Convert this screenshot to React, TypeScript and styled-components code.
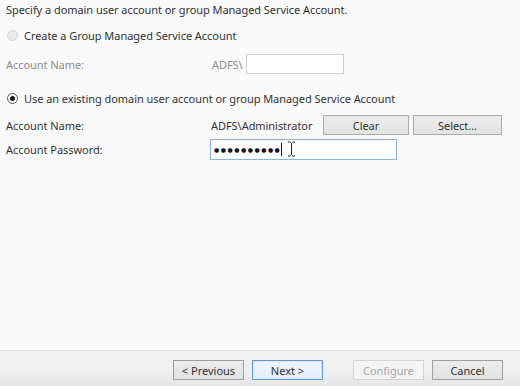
import styled, {createGlobalStyle} from "styled-components"
import {FC} from "react"

const GlobalStyle = createGlobalStyle`
  html, body {
    margin: 0;
    padding: 0;
    background: #fafafa;
  }
  body {
    font-family: "Noto Sans", "Open Sans", sans-serif;
    font-size: 11px;
    letter-spacing: -0.05px;
    color: #333;
  }
`

const App: FC = () => {
  return <Window>
    <GlobalStyle />
    <Content>
      <Intro>Specify a domain user account or group Managed Service Account.</Intro>

      <RadioRow $top={8}>
        <Radio $checked={false} $disabled />
        <span>Create a Group Managed Service Account</span>
      </RadioRow>

      <FieldRow $top={9}>
        <Label $disabled>Account Name:</Label>
        <Value>
          <Muted>ADFS\</Muted>
          <TextBox $width={98} />
        </Value>
      </FieldRow>

      <RadioRow $top={14}>
        <Radio $checked />
        <span>Use an existing domain user account or group Managed Service Account</span>
      </RadioRow>

      <FieldRow $top={7}>
        <Label>Account Name:</Label>
        <Value>
          <AccountText>ADFS\Administrator</AccountText>
          <SmallButton $width={86}>Clear</SmallButton>
          <SmallButton $width={89}>Select...</SmallButton>
        </Value>
      </FieldRow>

      <FieldRow $top={2}>
        <Label>Account Password:</Label>
        <Value>
          <PasswordBox>
            <Dots>●●●●●●●●●●</Dots>
            <Caret />
            <IBeam width="9" height="16" viewBox="0 0 9 16">
              <path d="M1 1h2.5M5.5 1H8M4.5 2v12M1 15h2.5M5.5 15H8M3.5 1.5l1 1 1-1M3.5 14.5l1-1 1 1" stroke="#222" strokeWidth="1" fill="none" />
            </IBeam>
          </PasswordBox>
        </Value>
      </FieldRow>
    </Content>

    <Footer>
      <WizardButton>&lt; Previous</WizardButton>
      <WizardButton $default>Next &gt;</WizardButton>
      <Spacer />
      <WizardButton disabled>Configure</WizardButton>
      <WizardButton>Cancel</WizardButton>
    </Footer>
  </Window>
}

const Window = styled.div`
  width: 520px;
  height: 386px;
  display: flex;
  flex-direction: column;
  overflow: hidden;
`

const Content = styled.div`
  flex: 1;
  background: #fafafa;
  padding: 2px 0 0 6px;
  display: flex;
  flex-direction: column;
`

const Intro = styled.div`
  line-height: 16px;
  height: 16px;
`

const RadioRow = styled.div<{ $top: number }>`
  margin-top: ${p => p.$top}px;
  height: 18px;
  display: flex;
  align-items: center;
  gap: 6px;
  padding-left: 1px;
`

const Radio = styled.span<{ $checked: boolean, $disabled?: boolean }>`
  width: 11px;
  height: 11px;
  border-radius: 50%;
  box-sizing: border-box;
  border: 1px solid ${p => p.$disabled ? "#d4d4d4" : "#5a5a5a"};
  background: ${p => p.$disabled ? "#ececec" : "#fdfdfd"};
  display: flex;
  align-items: center;
  justify-content: center;
  &::after {
    content: "";
    width: 5px;
    height: 5px;
    border-radius: 50%;
    background: #1a1a1a;
    display: ${p => p.$checked ? "block" : "none"};
  }
`

const FieldRow = styled.div<{ $top: number }>`
  margin-top: ${p => p.$top}px;
  height: 22px;
  display: grid;
  grid-template-columns: 204px 1fr;
  align-items: center;
`

const Label = styled.span<{ $disabled?: boolean }>`
  color: ${p => p.$disabled ? "#8c8c8c" : "#333"};
`

const Value = styled.div`
  display: flex;
  align-items: center;
  gap: 4px;
`

const Muted = styled.span`
  color: #8c8c8c;
  margin-left: 2px;
  margin-right: -1px;
`

const AccountText = styled.span`
  margin-left: 1px;
  width: 108px;
  white-space: nowrap;
`

const TextBox = styled.div<{ $width: number }>`
  width: ${p => p.$width}px;
  height: 20px;
  box-sizing: border-box;
  border: 1px solid #d0d0d0;
  background: #fff;
`

const SmallButton = styled.div<{ $width: number }>`
  width: ${p => p.$width}px;
  height: 20px;
  box-sizing: border-box;
  border: 1px solid #acacac;
  background: linear-gradient(#ececec, #e2e2e2);
  display: flex;
  align-items: center;
  justify-content: center;
  color: #333;
`

const PasswordBox = styled.div`
  position: relative;
  width: 187px;
  height: 21px;
  box-sizing: border-box;
  border: 1px solid #86b6e6;
  background: #fff;
  display: flex;
  align-items: center;
  padding-left: 3px;
`

const Dots = styled.span`
  font-family: "DejaVu Sans", sans-serif;
  font-size: 6px;
  letter-spacing: 1.5px;
  color: #111;
`

const Caret = styled.span`
  width: 1px;
  height: 13px;
  background: #111;
`

const IBeam = styled.svg`
  position: absolute;
  left: 76px;
  top: 1px;
`

const Footer = styled.div`
  height: 36px;
  border-top: 1px solid #dedede;
  background: linear-gradient(#f1f1f1 0%, #efefef 60%, #e6e6e6 100%);
  display: flex;
  align-items: center;
  justify-content: flex-end;
  gap: 8px;
  padding: 0 17px 0 0;
  padding-top: 3px;
  box-sizing: border-box;
`

const Spacer = styled.div`
  width: 14px;
`

const WizardButton = styled.button<{ $default?: boolean }>`
  width: 71px;
  height: 20px;
  box-sizing: border-box;
  margin: 0;
  padding: 0;
  font-family: "Noto Sans", "Open Sans", sans-serif;
  font-size: 11px;
  color: #333;
  border: 1px solid ${p => p.$default ? "#5b9bd5" : "#a0a0a0"};
  background: ${p => p.$default ? "linear-gradient(#eef4fb, #e5eef8)" : "linear-gradient(#ececec, #e1e1e1)"};
  box-shadow: ${p => p.$default ? "inset 0 0 0 1px #dbe9f7" : "none"};
  &:disabled {
    border-color: #d4d4d4;
    background: #f4f4f4;
    color: #a8a8a8;
  }
`

export default App
